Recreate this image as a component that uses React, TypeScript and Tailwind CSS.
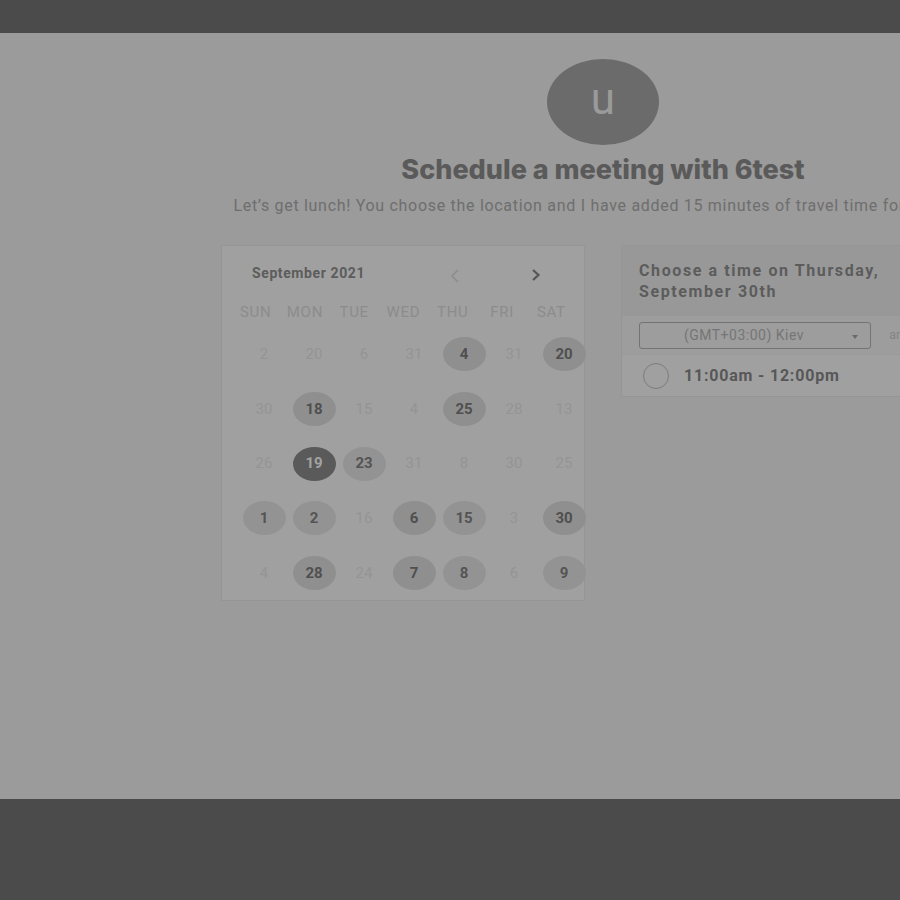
import React from "react";

type Day = { n: number; state: "off" | "on" | "sel" | "soft" };

const rows: Day[][] = [
  [
    { n: 2, state: "off" },
    { n: 20, state: "off" },
    { n: 6, state: "off" },
    { n: 31, state: "off" },
    { n: 4, state: "on" },
    { n: 31, state: "off" },
    { n: 20, state: "on" },
  ],
  [
    { n: 30, state: "off" },
    { n: 18, state: "on" },
    { n: 15, state: "off" },
    { n: 4, state: "off" },
    { n: 25, state: "on" },
    { n: 28, state: "off" },
    { n: 13, state: "off" },
  ],
  [
    { n: 26, state: "off" },
    { n: 19, state: "sel" },
    { n: 23, state: "soft" },
    { n: 31, state: "off" },
    { n: 8, state: "off" },
    { n: 30, state: "off" },
    { n: 25, state: "off" },
  ],
  [
    { n: 1, state: "soft" },
    { n: 2, state: "soft" },
    { n: 16, state: "off" },
    { n: 6, state: "on" },
    { n: 15, state: "soft" },
    { n: 3, state: "off" },
    { n: 30, state: "on" },
  ],
  [
    { n: 4, state: "off" },
    { n: 28, state: "on" },
    { n: 24, state: "off" },
    { n: 7, state: "on" },
    { n: 8, state: "soft" },
    { n: 6, state: "off" },
    { n: 9, state: "soft" },
  ],
];

const weekdays = ["SUN", "MON", "TUE", "WED", "THU", "FRI", "SAT"];

function DayCell({ day }: { day: Day }) {
  if (day.state === "off") {
    return (
      <div className="flex items-center justify-center text-[15px] text-[#949494]">
        {day.n}
      </div>
    );
  }
  const circle =
    day.state === "sel"
      ? "bg-[#5a5a5a] text-[#a3a3a3]"
      : day.state === "soft"
        ? "bg-[#939393] text-[#545454]"
        : "bg-[#8f8f8f] text-[#4f4f4f]";
  return (
    <div className="flex items-center justify-center">
      <div
        className={`flex h-[34px] w-[43px] items-center justify-center rounded-[50%] text-[15px] font-bold ${circle}`}
      >
        {day.n}
      </div>
    </div>
  );
}

function Calendar() {
  return (
    <div className="h-[356px] w-[364px] shrink-0 rounded-[2px] border border-[#959595] bg-[#a0a0a0] pt-[18px]">
      <div className="flex h-[18px] items-center pl-[30px]">
        <span className="w-[196px] text-[14px] font-bold tracking-[0.6px] text-[#5c5c5c]">
          September 2021
        </span>
        <svg width="10" height="16" viewBox="0 0 10 16" className="mt-[6px] ml-[2px]">
          <path d="M8 2 L2 8 L8 14" fill="none" stroke="#8c8c8c" strokeWidth="1.5" />
        </svg>
        <svg width="10" height="16" viewBox="0 0 10 16" className="mt-[4px] ml-[71px]">
          <path d="M2 3 L7.5 8 L2 13" fill="none" stroke="#555555" strokeWidth="2.2" />
        </svg>
      </div>
      <div className="mt-[19px] ml-[9px] grid h-[20px] w-[345px] grid-cols-7 items-center text-[15px] tracking-[0.7px] text-[#8c8c8c]">
        {weekdays.map((d) => (
          <div key={d} className="text-center">
            {d}
          </div>
        ))}
      </div>
      <div className="mt-[6px] ml-[17px] w-[350px]">
        {rows.map((r, i) => (
          <div key={i} className="grid h-[54.7px] grid-cols-7">
            {r.map((d, j) => (
              <DayCell key={j} day={d} />
            ))}
          </div>
        ))}
      </div>
    </div>
  );
}

function TimePanel() {
  return (
    <div className="h-[152px] w-[364px] shrink-0 rounded-[2px] border border-[#959595] bg-[#a0a0a0]">
      <div className="h-[70px] bg-[#989898] px-[17px] pt-[14px] text-[16px] leading-[21px] font-bold tracking-[1.6px] whitespace-nowrap text-[#5c5c5c]">
        Choose a time on Thursday,
        <br />
        September 30th
      </div>
      <div className="flex h-[38px] items-center bg-[#9d9d9d] pl-[17px]">
        <div className="relative flex h-[27px] w-[232px] items-center justify-center rounded-[3px] border border-[#737373] text-[14px] tracking-[0.5px] text-[#757575]">
          <span className="mr-[22px]">(GMT+03:00) Kiev</span>
          <span className="absolute top-[12px] right-[12px] h-0 w-0 border-x-[3.5px] border-t-[4px] border-x-transparent border-t-[#6a6a6a]" />
        </div>
        <span className="ml-[18px] text-[13px] text-[#858585]">am/pm</span>
      </div>
      <div className="flex h-[42px] items-center border-t border-[#9a9a9a] pl-[21px]">
        <div className="mt-[1px] h-[26px] w-[26px] rounded-full border-[1.5px] border-[#7c7c7c]" />
        <span className="mt-[1px] ml-[15px] text-[16px] font-bold tracking-[0.8px] text-[#575757]">
          11:00am - 12:00pm
        </span>
      </div>
    </div>
  );
}

export default function App() {
  return (
    <div
      className="flex h-[900px] w-[900px] flex-col bg-[#4b4b4b]"
      style={{ fontFamily: "Roboto, 'Liberation Sans', sans-serif" }}
    >
      <div className="h-[33px] shrink-0" />
      <div className="h-[766px] w-full overflow-hidden bg-[#9b9b9b]">
        <div className="flex w-[1206px] flex-col items-center pt-[26px]">
          <div className="flex h-[86px] w-[112px] items-center justify-center rounded-[50%] bg-[#6b6b6b] text-[44px] leading-none text-[#9a9a9a]">
            <span className="-mt-[6px]">u</span>
          </div>
          <h1
            className="mt-[11px] h-[28px] text-[27px] leading-[28px] font-extrabold text-[#5a5a5a]"
            style={{ fontFamily: "Inter, 'Liberation Sans', sans-serif" }}
          >
            Schedule a meeting with 6test
          </h1>
          <p className="mt-[12px] h-[20px] text-[16px] leading-[20px] tracking-[0.7px] whitespace-nowrap text-[#6e6e6e]">
            Let’s get lunch! You choose the location and I have added 15
            minutes of travel time for us both.
          </p>
          <div className="mt-[29px] flex items-start gap-[36px]">
            <Calendar />
            <TimePanel />
          </div>
        </div>
      </div>
      <div className="flex-1" />
    </div>
  );
}
